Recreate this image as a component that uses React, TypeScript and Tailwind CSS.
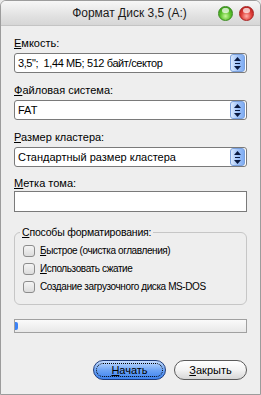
import React from "react";

const font = { fontFamily: '"Liberation Sans", Arial, sans-serif' };

const U = ({ c }: { c: string }) => <span className="underline underline-offset-[1px]">{c}</span>;

const Label = ({ first, rest, className = "" }: { first: string; rest: string; className?: string }) => (
  <div className={`h-[14px] leading-[14px] text-[11px] text-black ${className}`}>
    <U c={first} />
    {rest}
  </div>
);

const Spin = () => (
  <div className="w-[15px] h-[18px] my-auto mr-[1px] rounded-[3px] border border-[#7aa0dc] bg-[linear-gradient(to_right,#dbe9fd,#a2c4f8_50%,#7eacf3)] flex flex-col items-center justify-center gap-[2px]">
    <svg width="7" height="4" viewBox="0 0 7 4">
      <path d="M0 4L3.5 0L7 4Z" fill="#0a1a40" />
    </svg>
    <div className="w-[5px] h-[1px] bg-[#0a1a40]" />
    <svg width="7" height="4" viewBox="0 0 7 4">
      <path d="M0 0L3.5 4L7 0Z" fill="#0a1a40" />
    </svg>
  </div>
);

const Select = ({ value, className = "", tight = false }: { value: string; className?: string; tight?: boolean }) => (
  <div className={`h-[20px] flex rounded-[3px] border border-[#7a7a7a] bg-white ${className}`}>
    <div
      className={`flex-1 pl-[3px] text-[11px] leading-[18px] text-black whitespace-pre overflow-hidden ${
        tight ? "tracking-[-0.4px]" : ""
      }`}
    >
      {value}
    </div>
    <Spin />
  </div>
);

const Check = ({ first, rest }: { first?: string; rest: string }) => (
  <div className="flex items-center h-[18px] gap-[5px]">
    <div className="w-[12px] h-[12px] rounded-[3px] border border-[#8c8c8c] bg-[linear-gradient(#f4f4f4,#dcdcdc)]" />
    <div className="text-[10px] leading-[14px] tracking-[-0.4px] text-black">
      {first && <U c={first} />}
      {rest}
    </div>
  </div>
);

const Dot = ({ color }: { color: "green" | "red" }) => (
  <div
    className={`w-[15px] h-[15px] rounded-full border ${
      color === "green"
        ? "border-[#3a8a20] bg-[radial-gradient(circle_at_50%_70%,#c8f79a,#5cc22c_45%,#2f8c12)]"
        : "border-[#a82020] bg-[radial-gradient(circle_at_50%_70%,#ffb0a8,#e0403a_45%,#a81414)]"
    } relative`}
  >
    <div className="absolute left-[3px] top-[1px] w-[7px] h-[5px] rounded-full bg-white/70" />
  </div>
);

export default function App() {
  return (
    <div style={font} className="w-[261px] h-[395px] bg-[#e9e9e9]">
      <div className="w-[261px] h-[395px] flex flex-col border border-[#9c9c9c] rounded-t-[6px] bg-[#eeeeee] overflow-hidden">
        <div className="h-[25px] shrink-0 flex items-center border-b border-[#c4c4c4] bg-[linear-gradient(#f7f7f7,#e2e2e2_60%,#d6d6d6)] relative">
          <div className="flex-1 text-center text-[12px] text-[#1a1a1a] pr-[2px]">Формат Диск 3,5 (A:)</div>
          <div className="absolute right-[6px] top-[5px] flex gap-[6px]">
            <Dot color="green" />
            <Dot color="red" />
          </div>
        </div>
        <div className="flex flex-col px-[13px]">
          <Label first="Е" rest="мкость:" className="mt-[10px]" />
          <Select value={'3,5";  1,44 МБ; 512 байт/сектор'} className="mt-[3px]" tight />
          <Label first="Ф" rest="айловая система:" className="mt-[10px]" />
          <Select value="FAT" className="mt-[3px]" />
          <Label first="Р" rest="азмер кластера:" className="mt-[10px]" />
          <Select value="Стандартный размер кластера" className="mt-[3px]" />
          <Label first="М" rest="етка тома:" className="mt-[9px]" />
          <div className="mt-[1px] h-[21px] border border-[#7a7a7a] bg-white" />
          <div className="mt-[20px] h-[73px] rounded-[6px] border border-[#c6c6c6] relative pt-[9px] pl-[8px]">
            <div className="absolute left-[5px] -top-[8px] px-[2px] bg-[#eeeeee] text-[10.5px] leading-[14px] tracking-[-0.2px] text-black">
              <U c="С" />
              пособы форматирования:
            </div>
            <Check first="Б" rest="ыстрое (очистка оглавления)" />
            <Check first="И" rest="спользовать сжатие" />
            <Check rest="Создание загрузочного диска MS-DOS" />
          </div>
          <div className="mt-[14px] h-[14px] border border-[#a0a0a0] bg-[linear-gradient(#fafafa,#e8e8e8)] flex items-center">
            <div className="w-[3px] h-[8px] rounded-r-[2px] bg-[#3b82f6]" />
          </div>
          <div className="mt-[27px] flex justify-end gap-[8px]">
            <div className="w-[73px] h-[20px] rounded-full border border-[#1f3c7a] bg-[linear-gradient(#c5dcfd,#6ea5f5_50%,#3d82ee)] p-[2px]">
              <div className="h-full rounded-full border border-dotted border-black flex items-center justify-center text-[11px] text-black">
                <U c="Н" />
                ачать
              </div>
            </div>
            <div className="w-[73px] h-[20px] rounded-full border border-[#5a5a5a] bg-[linear-gradient(#ffffff,#f3f3f3_50%,#d6d6d6)] flex items-center justify-center text-[11px] text-black">
              <U c="З" />
              акрыть
            </div>
          </div>
        </div>
      </div>
    </div>
  );
}
